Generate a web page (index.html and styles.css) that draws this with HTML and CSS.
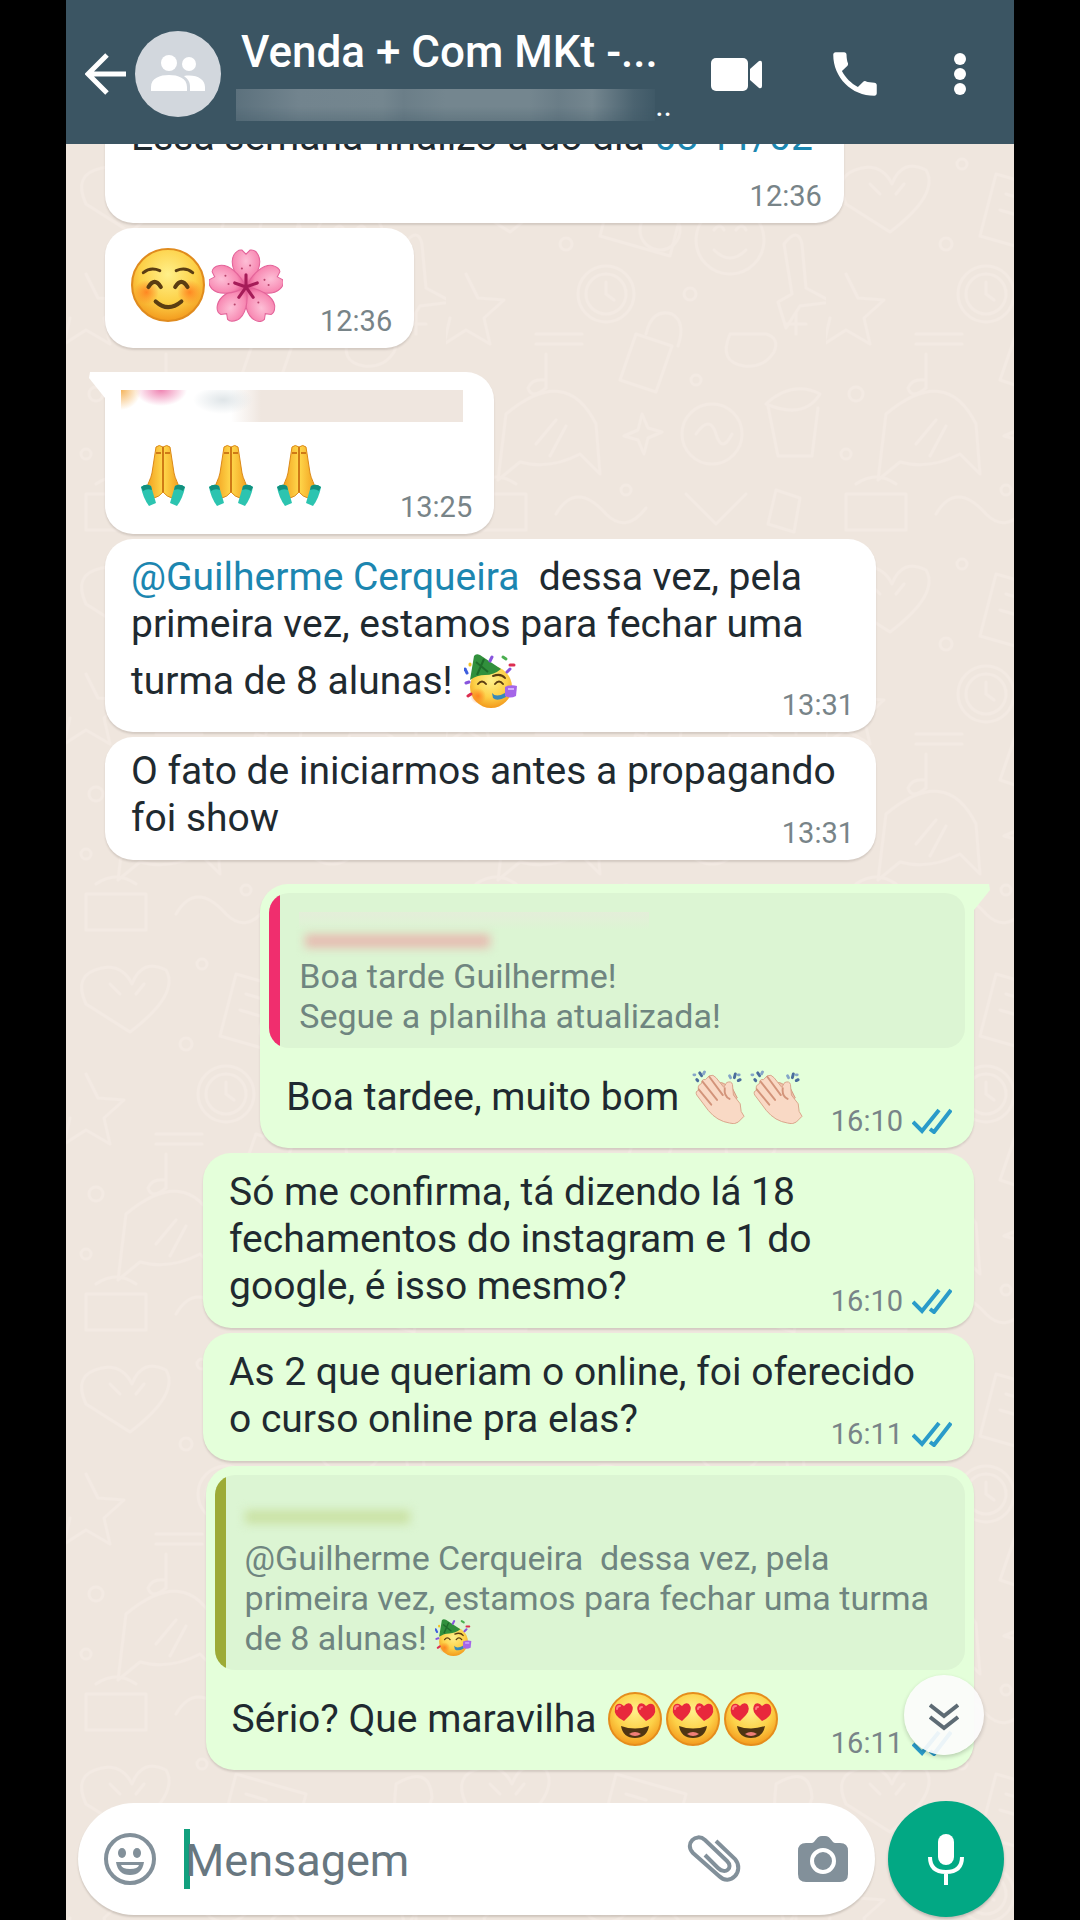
FILE: index.html
```html
<!DOCTYPE html>
<html lang="pt-BR">
<head>
  <meta charset="UTF-8">
  <meta name="viewport" content="width=device-width, initial-scale=1.0">
  <title>Venda + Com MKt</title>
  <link rel="stylesheet" href="styles.css">
</head>
<body>

<!-- Emojis e ícones reutilizados -->
<svg class="sprite" aria-hidden="true">
  <defs>
    <radialGradient id="skin" cx="50%" cy="35%" r="65%">
      <stop offset="0" stop-color="#fff08a"/>
      <stop offset="0.6" stop-color="#fdd148"/>
      <stop offset="1" stop-color="#f39a1d"/>
    </radialGradient>
    <radialGradient id="cheek">
      <stop offset="0" stop-color="#ff7a1c" stop-opacity="0.85"/>
      <stop offset="1" stop-color="#ff7a1c" stop-opacity="0"/>
    </radialGradient>
    <radialGradient id="petal" cx="50%" cy="30%" r="75%">
      <stop offset="0" stop-color="#fdbfd6"/>
      <stop offset="0.6" stop-color="#f88bb4"/>
      <stop offset="1" stop-color="#d9397a"/>
    </radialGradient>
    <linearGradient id="hand" x1="0" x2="1">
      <stop offset="0" stop-color="#f2a01f"/>
      <stop offset="0.5" stop-color="#ffd84c"/>
      <stop offset="1" stop-color="#f2a01f"/>
    </linearGradient>

    <symbol id="blush" viewBox="0 0 72 72">
      <circle cx="36" cy="36" r="35" fill="url(#skin)" stroke="#e08b1e" stroke-width="2"/>
      <circle cx="15" cy="43" r="12" fill="url(#cheek)"/>
      <circle cx="57" cy="43" r="12" fill="url(#cheek)"/>
      <g fill="none" stroke="#5b3d12" stroke-linecap="round">
        <path d="M12 24q7-6 16-2M44 22q9-4 16 2" stroke-width="3"/>
        <path d="M17 38q6-10 12 0M43 38q6-10 12 0" stroke-width="4"/>
        <path d="M24 52q12 11 25 0" stroke-width="4"/>
      </g>
    </symbol>

    <symbol id="flower" viewBox="0 0 72 72">
      <g fill="url(#petal)" stroke="#e3649a" stroke-width="1">
        <path d="M36 38C25 28 20 15 24 7q4-6 8-5l4 4 4-4q5-1 8 5c4 8-1 21-12 31z"/>
        <path d="M36 38C25 28 20 15 24 7q4-6 8-5l4 4 4-4q5-1 8 5c4 8-1 21-12 31z" transform="rotate(72 36 38)"/>
        <path d="M36 38C25 28 20 15 24 7q4-6 8-5l4 4 4-4q5-1 8 5c4 8-1 21-12 31z" transform="rotate(144 36 38)"/>
        <path d="M36 38C25 28 20 15 24 7q4-6 8-5l4 4 4-4q5-1 8 5c4 8-1 21-12 31z" transform="rotate(216 36 38)"/>
        <path d="M36 38C25 28 20 15 24 7q4-6 8-5l4 4 4-4q5-1 8 5c4 8-1 21-12 31z" transform="rotate(288 36 38)"/>
      </g>
      <path d="M36 38V26M36 38l11-4M36 38l7 10M36 38l-7 10M36 38l-11-4" stroke="#a51c58" stroke-width="3" stroke-linecap="round"/>
      <g fill="#b9456d">
        <circle cx="40" cy="17" r="1"/><circle cx="32" cy="20" r="1"/><circle cx="54" cy="31" r="1"/><circle cx="58" cy="36" r="1"/>
        <circle cx="16" cy="27" r="1"/><circle cx="19" cy="35" r="1"/><circle cx="25" cy="55" r="1"/><circle cx="48" cy="53" r="1"/>
      </g>
    </symbol>

    <symbol id="pray" viewBox="0 0 48 64">
      <path d="M17 4q3-3 7 0 4-3 7 0l4 26c1 6 5 11 5 16l-7 9q-5-1-9-6-4 5-9 6l-7-9c0-5 4-10 5-16z" fill="url(#hand)" stroke="#dc8a18" stroke-width="1"/>
      <path d="M24 4v45M17 10h5M26 10h5" stroke="#cf7a16" stroke-width="2" fill="none"/>
      <path d="M2 44q5-4 10-1l5 17-7 3q-6-8-8-19z" fill="#2cc4b0"/>
      <path d="M46 44q-5-4-10-1l-5 17 7 3q6-8 8-19z" fill="#2cc4b0"/>
      <path d="M2 44q5-4 10-1l1 4q-5-2-9 1zM46 44q-5-4-10-1l-1 4q5-2 9 1z" fill="#12907f"/>
    </symbol>

    <symbol id="party" viewBox="0 0 54 54">
      <circle cx="27" cy="33" r="21" fill="url(#skin)"/>
      <circle cx="14" cy="42" r="8" fill="url(#cheek)"/>
      <path d="M10 2q2-3 6-1l21 14q-7 6-16 6-8 0-15 5z" fill="#31903c"/>
      <path d="M12 8l12 10M20 5l-7 16" stroke="#1f6c2a" stroke-width="2"/>
      <g fill="none" stroke="#5b3d12" stroke-linecap="round" stroke-width="2">
        <path d="M14 30q4-5 8 0M31 30q4-5 8 0M29 22q8-3 12 2"/>
      </g>
      <path d="M28 39q4 5 13 0l1 4q-9 5-13 1z" fill="#3789b8"/>
      <path d="M41 33q6-3 12-1l-1 10q-6 3-11 0z" fill="#a566e8"/>
      <path d="M44 35h6" stroke="#d3aefc" stroke-width="2"/>
      <g stroke-width="3" stroke-linecap="round">
        <path d="M26 7l2-4M2 29l3-1M43 18l3-3" stroke="#8754dd"/>
        <path d="M1 15l2 4" stroke="#3c5ede"/>
        <path d="M39 3l3 2" stroke="#4caf50"/>
        <path d="M46 11h4M4 42l3-2" stroke="#dc2e50"/>
        <path d="M6 10v1" stroke="#f3c426"/>
      </g>
    </symbol>

    <symbol id="clap" viewBox="0 0 54 56">
      <g stroke-linecap="round" stroke-width="3">
        <path d="M5 10l1 1M8 3l2 3" stroke="#4a6d9c"/>
        <path d="M2 5h1M13 2l-1 2" stroke="#85a6c8"/>
        <path d="M45 4l-1 4M50 10l-2 1" stroke="#4a6d9c"/>
        <path d="M39 6l1 2M48 5h1" stroke="#85a6c8"/>
      </g>
      <path d="M25 17q3-6 8-3l9 5 5 10-10 8z" fill="#eec0a8" stroke="#d39a80" stroke-width="1"/>
      <path d="M18 6q4-2 7 2l8 10 3-5q5-2 6 2l1 11 7 9 1 8 3 5-6 6q-4 3-9 1-13-2-22-13L5 26q-2-4 2-5-2-5 3-7 0-5 4-4z" fill="#f9d9c5" stroke="#d8a389" stroke-width="1"/>
      <path d="M18 7l14 19M11 12l15 19M7 20l13 16M34 19q-1 8 5 11" fill="none" stroke="#d3947a" stroke-width="2" stroke-linecap="round"/>
    </symbol>

    <symbol id="love" viewBox="0 0 54 54">
      <circle cx="27" cy="27" r="26" fill="url(#skin)" stroke="#e58d1c" stroke-width="2"/>
      <path d="M16 29Q5 24 7 16q1-5 6-4l3 2q3-4 7-2 4 5-1 11zM38 29q11-5 9-13-1-5-6-4l-3 2q-3-4-7-2-4 5 1 11z" fill="#e8283c"/>
      <path d="M9 17q0-3 3-3M34 15q-2 0-2 2" fill="none" stroke="#ff7a80" stroke-width="2" stroke-linecap="round"/>
      <path d="M13 34q14 5 28 0-2 12-14 12T13 34z" fill="#4f3512"/>
      <path d="M21 42q6-4 12 0-6 4-12 0z" fill="#f07f78"/>
    </symbol>

    <symbol id="ticks" viewBox="0 0 40 26">
      <path d="M1 14l9 9L27 2M18 21l4 3L39 2" fill="none" stroke="#2a9bc9" stroke-width="4"/>
    </symbol>

    <pattern id="doodles" width="380" height="400" patternUnits="userSpaceOnUse">
      <g fill="none" stroke="#f3eae3" stroke-width="3" stroke-linecap="round" stroke-linejoin="round">
        <path d="M20 60q-14-30 16-36 20-4 30 16 10-26 34-14 14 24-36 62zM44 40l10 10M70 50l8-10"/>
        <path d="M170 30l70 20-16 62-70-20zM180 50l20 6M174 66l20 6"/>
        <circle cx="214" cy="86" r="20"/>
        <circle cx="284" cy="96" r="34"/>
        <path d="M268 86q6-8 10 0M290 86q6-8 10 0M268 106q16 16 32 0"/>
        <circle cx="160" cy="150" r="28"/><circle cx="160" cy="150" r="20"/><path d="M160 138v12l8 6"/>
        <path d="M330 40q34-20 36 14-4 20-38 12zM346 150l-8-50q14-18 18 0l4 44 26 14-32 4-14 22-8-26z"/>
        <path d="M20 130l12 24 26 2-20 18 6 26-24-14-22 14 6-26M90 190h46M90 200h46M100 210v34q-14 12-18 0 4-10 18-8"/>
        <path d="M190 190l36 12-16 46-36-12zM200 190q6-26 26-20 14 8 6 32"/>
        <path d="M284 190h36q14 4 8 18-10 16-30 14-26-4-14-32zM340 180h20M350 170v20"/>
        <path d="M60 270q60-50 90 10l4 50-20-20q-30 16-60 8l-22 18zM90 300l20-24M104 312l16-30"/>
        <circle cx="266" cy="290" r="30"/><path d="M250 290q14-20 20 0t16 0"/>
        <path d="M320 260q26-24 54-10-16 26-54 10zM322 262l10 50h34l6-48"/>
        <path d="M196 270l6 14 14 4-14 6-4 16-6-14-14-4 14-6z"/>
        <path d="M20 350h60v36H20zM30 340q20-14 40 0M110 370q20-34 50 0 20 20 40-6M240 350l30 30 30-30M330 346l24 8-6 34-26-8z"/>
        <circle cx="136" cy="20" r="5"/><circle cx="120" cy="100" r="6"/><circle cx="244" cy="150" r="6"/><circle cx="250" cy="236" r="5"/>
        <circle cx="30" cy="250" r="7"/><circle cx="180" cy="346" r="5"/><circle cx="310" cy="14" r="6"/><circle cx="20" cy="310" r="5"/>
      </g>
    </pattern>
  </defs>
</svg>

<div class="phone">
  <header class="topbar">
    <button class="icon-btn back" aria-label="Voltar">
      <svg width="42" height="42" viewBox="0 0 42 42"><path d="M41 21H4M22 2L3 21l19 19" fill="none" stroke="#fff" stroke-width="5"/></svg>
    </button>
    <div class="avatar">
      <svg width="56" height="40" viewBox="0 0 56 40" fill="#fff">
        <circle cx="19" cy="9" r="8"/><circle cx="39" cy="10" r="7"/>
        <path d="M1 37v-4c0-9 9-12 18-12s18 3 18 12v4zM34 22c12-2 21 3 21 11v4H40v-4c0-5-2-8-6-11z"/>
      </svg>
    </div>
    <div class="group">
      <h1>Venda + Com MKt -...</h1>
      <div class="members"><span class="members-blur"></span>..</div>
    </div>
    <button class="icon-btn" aria-label="Chamada de vídeo">
      <svg width="60" height="44" viewBox="0 0 60 44" fill="#fff"><rect x="5" y="6" width="37" height="33" rx="5"/><path d="M44 17l9-8q3-1 3 2v23q0 3-3 2l-9-8z"/></svg>
    </button>
    <button class="icon-btn" aria-label="Ligar">
      <svg width="58" height="58" viewBox="0 0 24 24" fill="#fff"><path d="M6.6 10.8c1.4 2.8 3.8 5.1 6.6 6.6l2.2-2.2c.3-.3.7-.4 1-.2 1.100.4 2.300.6 3.600.6.6 0 1 .4 1 1V20c0 .6-.4 1-1 1C10.600 21 3 13.400 3 4c0-.6.4-1 1-1h3.500c.6 0 1 .4 1 1 0 1.200.2 2.500.6 3.600.1.300 0 .7-.2 1z"/></svg>
    </button>
    <button class="icon-btn" aria-label="Mais opções">
      <svg width="32" height="44" viewBox="0 0 32 44" fill="#fff"><circle cx="16" cy="7" r="6"/><circle cx="16" cy="22" r="6"/><circle cx="16" cy="37" r="6"/></svg>
    </button>
  </header>

  <main class="chat">
    <svg class="wallpaper" aria-hidden="true"><rect width="100%" height="100%" fill="url(#doodles)"/></svg>

    <div class="messages">
      <div class="bubble in wide">
        <p>Essa semana finalizo a do dia <a href="#">08-11/02</a></p>
        <time class="meta">12:36</time>
      </div>

      <div class="bubble in row">
        <span class="big">
          <svg width="74" height="74" role="img" aria-label="sorriso"><use href="#blush"/></svg>
          <svg width="74" height="74" role="img" aria-label="flor"><use href="#flower"/></svg>
        </span>
        <time class="meta">12:36</time>
      </div>

      <div class="bubble in tail first">
        <div class="sender-blur"></div>
        <div class="row">
          <span class="prayers">
            <svg width="48" height="64" role="img" aria-label="mãos juntas"><use href="#pray"/></svg>
            <svg width="48" height="64" role="img" aria-label="mãos juntas"><use href="#pray"/></svg>
            <svg width="48" height="64" role="img" aria-label="mãos juntas"><use href="#pray"/></svg>
          </span>
          <time class="meta">13:25</time>
        </div>
      </div>

      <div class="bubble in">
        <p><a href="#">@Guilherme Cerqueira</a>&nbsp; dessa vez, pela primeira vez, estamos para fechar uma turma de 8 alunas! <svg class="emoji" role="img" aria-label="festa"><use href="#party"/></svg></p>
        <time class="meta">13:31</time>
      </div>

      <div class="bubble in tight">
        <p>O fato de iniciarmos antes a propagando foi show</p>
        <time class="meta">13:31</time>
      </div>

      <div class="bubble out tail first">
        <blockquote class="quote pink">
          <div class="name-blur"></div>
          <p>Boa tarde Guilherme!<br>Segue a planilha atualizada!</p>
        </blockquote>
        <div class="row">
          <p>Boa tardee, muito bom <svg class="emoji" role="img" aria-label="palmas"><use href="#clap"/></svg><svg class="emoji" role="img" aria-label="palmas"><use href="#clap"/></svg></p>
          <div class="meta"><time>16:10</time><svg width="40" height="26"><use href="#ticks"/></svg></div>
        </div>
      </div>

      <div class="bubble out">
        <p>Só me confirma, tá dizendo lá 18 fechamentos do instagram e 1 do google,&nbsp;é isso mesmo?</p>
        <div class="meta"><time>16:10</time><svg width="40" height="26"><use href="#ticks"/></svg></div>
      </div>

      <div class="bubble out">
        <p>As 2 que queriam o online, foi oferecido o&nbsp;curso online pra elas?</p>
        <div class="meta"><time>16:11</time><svg width="40" height="26"><use href="#ticks"/></svg></div>
      </div>

      <div class="bubble out">
        <blockquote class="quote olive">
          <div class="name-blur"></div>
          <p>@Guilherme Cerqueira&nbsp; dessa vez, pela<br>primeira vez, estamos para fechar uma turma<br>de 8 alunas! <svg class="emoji-small" role="img" aria-label="festa"><use href="#party"/></svg></p>
        </blockquote>
        <div class="row">
          <p>Sério? Que maravilha <svg class="emoji" role="img" aria-label="apaixonado"><use href="#love"/></svg><svg class="emoji" role="img" aria-label="apaixonado"><use href="#love"/></svg><svg class="emoji" role="img" aria-label="apaixonado"><use href="#love"/></svg></p>
          <div class="meta"><time>16:11</time><svg width="40" height="26"><use href="#ticks"/></svg></div>
        </div>
      </div>
    </div>

    <button class="scroll-down" aria-label="Ir para o fim">
      <svg width="30" height="28" viewBox="0 0 30 28"><path d="M1 2l14 11L29 2M1 14l14 11 14-11" fill="none" stroke="#5d6b74" stroke-width="4"/></svg>
    </button>

    <form class="composer">
      <div class="field">
        <button type="button" class="icon-btn" aria-label="Emojis">
          <svg width="54" height="54" viewBox="0 0 54 54">
            <circle cx="27" cy="27" r="24" fill="none" stroke="#82909a" stroke-width="4"/>
            <ellipse cx="19" cy="21" rx="4" ry="5" fill="#82909a"/><ellipse cx="34" cy="21" rx="4" ry="5" fill="#82909a"/>
            <path d="M13 30h28q-2 13-14 13T13 30zm5 3q1 4 9 4t9-4z" fill="#82909a" fill-rule="evenodd"/>
          </svg>
        </button>
        <span class="caret"></span>
        <input type="text" placeholder="Mensagem" aria-label="Mensagem">
        <button type="button" class="icon-btn" aria-label="Anexar">
          <svg width="54" height="50" viewBox="0 0 54 50"><path d="M29 7L48 25C58 37 43 53 32 42L6 19C-3 10 9-2 18 6L40 27C47 34 38 41 31 34L18 21" fill="none" stroke="#82909a" stroke-width="4"/></svg>
        </button>
        <button type="button" class="icon-btn" aria-label="Câmera">
          <svg width="50" height="46" viewBox="0 0 50 46"><path d="M8 7h6c4-1 4-7 10-7h3c6 0 6 6 10 7h5q8 0 8 8v23q0 8-8 8H8q-8 0-8-8V15q0-8 8-8z" fill="#82909a"/><circle cx="25" cy="25" r="11" fill="none" stroke="#fff" stroke-width="4"/></svg>
        </button>
      </div>
      <button type="button" class="mic" aria-label="Gravar áudio">
        <svg width="38" height="52" viewBox="0 0 38 52"><rect x="11" y="1" width="16" height="31" rx="8" fill="#fff"/><path d="M3 24q0 15 16 15t16-15M19 39v13" fill="none" stroke="#fff" stroke-width="4"/></svg>
      </button>
    </form>
  </main>
</div>

</body>
</html>
```
FILE: styles.css
```css
* {
  box-sizing: border-box;
}

body {
  margin: 0;
  padding: 0 66px;
  background: #000;
  font-family: Roboto, sans-serif;
  color: #1f2a30;
}

h1, p, blockquote {
  margin: 0;
}

a {
  color: #1c86b0;
  text-decoration: none;
}

svg {
  flex: none;
}

.sprite {
  position: absolute;
  width: 0;
  height: 0;
}

.phone {
  display: flex;
  flex-direction: column;
  height: 100vh;
  overflow: hidden;
}

.icon-btn {
  display: flex;
  padding: 0;
  border: none;
  background: none;
  cursor: pointer;
}

/* barra superior */
.topbar {
  display: flex;
  align-items: center;
  gap: 60px;
  flex: none;
  height: 144px;
  padding: 4px 38px 0 19px;
  background: #3b5563;
  color: #fff;
}

.back {
  margin-right: -52px;
}

.avatar {
  display: flex;
  align-items: center;
  justify-content: center;
  flex: none;
  width: 86px;
  height: 86px;
  margin-right: -45px;
  border-radius: 50%;
  background: #d2d7dd;
}

.group {
  flex: 1;
  min-width: 0;
  margin-right: -26px;
}

.group h1 {
  padding-left: 5px;
  font-size: 44px;
  line-height: 50px;
  font-weight: 500;
  white-space: nowrap;
}

.members {
  display: flex;
  align-items: center;
  margin-top: 12px;
  font-size: 32px;
  line-height: 32px;
}

.members-blur {
  flex: 1;
  height: 32px;
  background:
    linear-gradient(transparent 55%, rgba(59, 85, 99, 0.3)),
    linear-gradient(90deg, #5c717d, #72848e 15%, #74868f 35%, #6b7e88 40%, #74868f 50%, #74868f 70%, #6a7d87 77%, #74868f 85%, #4b6370 95%, #3f5967);
}

/* conversa */
.chat {
  position: relative;
  display: flex;
  flex-direction: column;
  flex: 1;
  min-height: 0;
  background: #efe6de;
}

.wallpaper {
  position: absolute;
  width: 100%;
  height: 100%;
}

.messages {
  position: relative;
  display: flex;
  flex-direction: column;
  justify-content: flex-end;
  flex: 1;
  gap: 5px;
  min-height: 0;
  padding: 0 40px 31px 39px;
  overflow: hidden;
}

.bubble {
  position: relative;
  display: flex;
  flex-direction: column;
  flex: none;
  max-width: 771px;
  padding: 15px 22px 10px 26px;
  border-radius: 28px;
  font-size: 39px;
  line-height: 47px;
  box-shadow: 0 2px 2px rgba(60, 50, 40, 0.15);
}

.in {
  align-self: flex-start;
  background: #fff;
}

.out {
  align-self: flex-end;
  padding-top: 16px;
  background: #e4ffda;
}

.tight {
  padding-top: 11px;
}

.first {
  margin-top: 19px;
}

.tail::before {
  content: "";
  position: absolute;
  top: 0;
  width: 17px;
  height: 26px;
}

.in.tail {
  border-top-left-radius: 0;
}

.in.tail::before {
  right: 100%;
  background: #fff;
  clip-path: polygon(2px 0, 100% 0, 100% 100%, 1px 6px);
}

.out.tail {
  border-top-right-radius: 0;
}

.out.tail::before {
  left: 100%;
  background: #e4ffda;
  clip-path: polygon(0 0, 15px 0, 16px 6px, 0 100%);
}

.meta {
  display: flex;
  align-items: center;
  align-self: flex-end;
  gap: 9px;
  margin-top: -26px;
  color: #788488;
  font-size: 29px;
  line-height: 34px;
}

.wide p {
  padding-right: 9px;
}

.wide .meta {
  margin-top: 18px;
}

.row {
  display: flex;
  flex-direction: row;
  justify-content: space-between;
  gap: 26px;
}

.row > p {
  padding-bottom: 8px;
  white-space: nowrap;
}

.big {
  display: flex;
  gap: 4px;
  margin: 5px 11px 16px 0;
}

.prayers {
  display: flex;
  gap: 20px;
  margin: 20px 51px 17px 8px;
}

.emoji {
  width: 54px;
  height: 54px;
  margin: 6px 2px;
  vertical-align: -20px;
}

.emoji-small {
  width: 37px;
  height: 37px;
  margin: -6px 0;
  vertical-align: 0;
}

.sender-blur {
  width: 342px;
  height: 32px;
  margin: 3px 0 1px -10px;
  background:
    radial-gradient(ellipse 20px 20px at 0 0, #f5b45c, transparent),
    radial-gradient(ellipse 26px 16px at 40px 0, #ef85b3, transparent),
    radial-gradient(ellipse 30px 14px at 102px 10px, #dfe5e8, transparent),
    linear-gradient(90deg, #fff 110px, #efe6df 140px);
}

/* citação */
.quote {
  position: relative;
  margin: -7px -13px 16px -17px;
  padding: 19px 36px 12px 30px;
  border-radius: 20px;
  background: #dcf5d3;
  color: #6f8580;
  font-size: 34px;
  line-height: 40px;
  overflow: hidden;
}

.quote::before {
  content: "";
  position: absolute;
  top: 0;
  bottom: 0;
  left: 0;
  width: 11px;
}

.pink::before {
  background: #f02e6e;
}

.olive::before {
  background: #9dab37;
}

.name-blur {
  display: flex;
  align-items: flex-end;
  width: 350px;
  height: 44px;
  padding: 0 0 8px 6px;
}

.name-blur::before {
  content: "";
  width: 185px;
  height: 14px;
  filter: blur(5px);
}

.pink .name-blur {
  background: linear-gradient(#e4eed9, #dcf5d3 18px);
}

.pink .name-blur::before {
  background: #e6bdb2;
}

.olive .name-blur {
  padding: 0 0 14px;
}

.olive .name-blur::before {
  width: 165px;
  background: #cbe2a6;
}

.scroll-down {
  position: absolute;
  right: 30px;
  bottom: 165px;
  display: flex;
  align-items: center;
  justify-content: center;
  width: 80px;
  height: 80px;
  padding: 4px 0 0;
  border: none;
  border-radius: 50%;
  background: rgba(252, 252, 252, 0.92);
  box-shadow: 0 2px 4px rgba(0, 0, 0, 0.2);
  cursor: pointer;
}

/* campo de mensagem */
.composer {
  position: relative;
  display: flex;
  align-items: center;
  gap: 13px;
  flex: none;
  padding: 0 10px 3px 12px;
}

.field {
  display: flex;
  align-items: center;
  flex: 1;
  min-width: 0;
  height: 112px;
  padding: 0 27px 0 25px;
  border-radius: 56px;
  background: #fff;
  box-shadow: 0 2px 2px rgba(60, 50, 40, 0.18);
}

.field input {
  flex: 1;
  min-width: 0;
  padding: 3px 0 0;
  border: none;
  outline: none;
  background: none;
  font-family: inherit;
  font-size: 45px;
}

.field input::placeholder {
  color: #687780;
  opacity: 1;
}

.caret {
  width: 6px;
  height: 60px;
  margin: 0 -5px 0 27px;
  background: #12a07e;
}

.field .icon-btn:last-child {
  margin-left: 57px;
}

.mic {
  display: flex;
  align-items: center;
  justify-content: center;
  width: 116px;
  height: 116px;
  padding: 0;
  border: none;
  border-radius: 50%;
  background: #02a884;
  box-shadow: 0 2px 3px rgba(0, 0, 0, 0.2);
  cursor: pointer;
}
```
